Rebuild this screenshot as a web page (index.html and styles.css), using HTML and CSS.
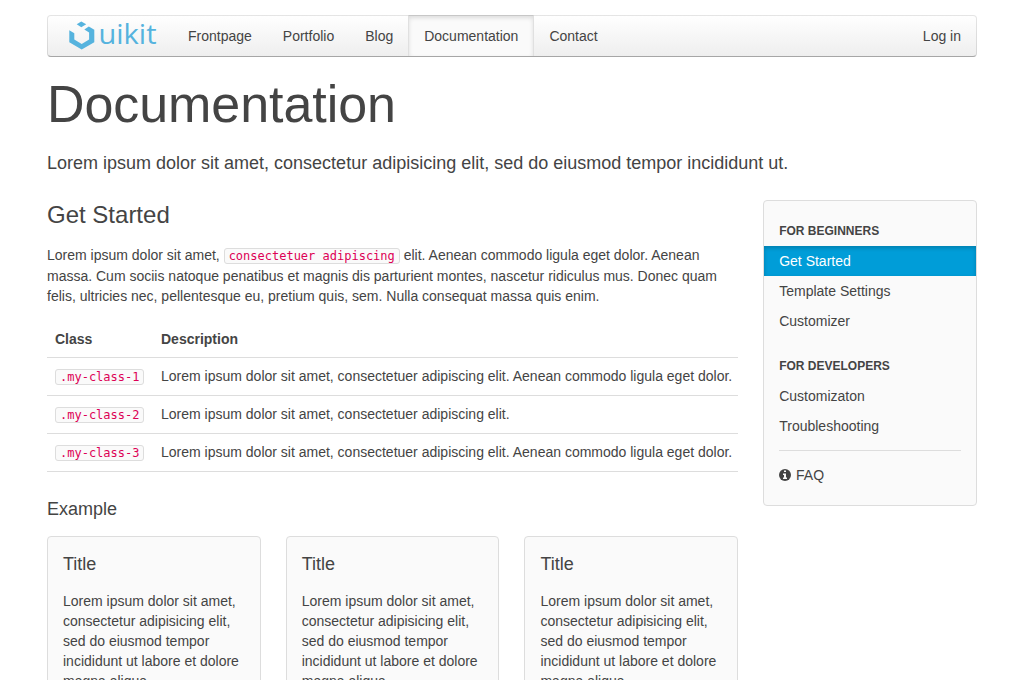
FILE: index.html
```html
<!DOCTYPE html>
<html lang="en">
<head>
<meta charset="utf-8">
<title>Documentation</title>
<link rel="stylesheet" href="styles.css">
</head>
<body>
<div class="container">
  <nav class="navbar">
    <a class="brand" href="#">
      <svg width="90" height="30" viewBox="0 0 90 30" role="img" aria-label="uikit">
        <g fill="#55b3de">
          <path d="M1.300 9.300 6.300 12.300V18.600l7.400 4.300 7.400-4.300V11.500L16.300 8.600l4.500-3.100 5.500 3.300V21.300L13.700 28.500 1.300 21.300z"/>
          <path d="M13.300.500 18.200 3.300 13.300 6.200 8.700 3.300z"/>
          <text class="wordmark" x="30.500" y="22.500" textLength="58" lengthAdjust="spacingAndGlyphs">uikit</text>
        </g>
      </svg>
    </a>
    <ul class="menu">
      <li><a href="#">Frontpage</a></li>
      <li><a href="#">Portfolio</a></li>
      <li><a href="#">Blog</a></li>
      <li class="current"><a href="#">Documentation</a></li>
      <li><a href="#">Contact</a></li>
    </ul>
    <ul class="menu menu-end">
      <li><a href="#">Log in</a></li>
    </ul>
  </nav>

  <header class="intro">
    <h1>Documentation</h1>
    <p class="lead">Lorem ipsum dolor sit amet, consectetur adipisicing elit, sed do eiusmod tempor incididunt ut.</p>
  </header>

  <div class="layout">
    <main class="content">
      <h2>Get Started</h2>
      <p class="text">Lorem ipsum dolor sit amet, <code>consectetuer adipiscing</code> elit. Aenean commodo ligula eget dolor. Aenean massa. Cum sociis natoque penatibus et magnis dis parturient montes, nascetur ridiculus mus. Donec quam felis, ultricies nec, pellentesque eu, pretium quis, sem. Nulla consequat massa quis enim.</p>
      <table class="table">
        <thead>
          <tr><th>Class</th><th>Description</th></tr>
        </thead>
        <tbody>
          <tr><td><code>.my-class-1</code></td><td>Lorem ipsum dolor sit amet, consectetuer adipiscing elit. Aenean commodo ligula eget dolor.</td></tr>
          <tr><td><code>.my-class-2</code></td><td>Lorem ipsum dolor sit amet, consectetuer adipiscing elit.</td></tr>
          <tr><td><code>.my-class-3</code></td><td>Lorem ipsum dolor sit amet, consectetuer adipiscing elit. Aenean commodo ligula eget dolor.</td></tr>
        </tbody>
      </table>
      <h3>Example</h3>
      <div class="cards">
        <section class="card"><h3>Title</h3><p>Lorem ipsum dolor sit amet, consectetur adipisicing elit, sed do eiusmod tempor incididunt ut labore et dolore magna aliqua.</p></section>
        <section class="card"><h3>Title</h3><p>Lorem ipsum dolor sit amet, consectetur adipisicing elit, sed do eiusmod tempor incididunt ut labore et dolore magna aliqua.</p></section>
        <section class="card"><h3>Title</h3><p>Lorem ipsum dolor sit amet, consectetur adipisicing elit, sed do eiusmod tempor incididunt ut labore et dolore magna aliqua.</p></section>
      </div>
    </main>
    <aside class="sidebar">
      <ul class="side-nav">
        <li class="side-header">For Beginners</li>
        <li class="selected"><a href="#">Get Started</a></li>
        <li><a href="#">Template Settings</a></li>
        <li><a href="#">Customizer</a></li>
        <li class="side-header">For Developers</li>
        <li><a href="#">Customizaton</a></li>
        <li><a href="#">Troubleshooting</a></li>
        <li class="divider"></li>
        <li><a href="#"><svg class="info" width="12" height="12" viewBox="0 0 12 12"><circle cx="6" cy="6" r="6" fill="#444"/><path fill="#fafafa" d="M5 1.500h2V3H5zM4 4.500h3V8.500h1V10H4V8.500h1V6H4z"/></svg> FAQ</a></li>
      </ul>
    </aside>
  </div>
</div>
</body>
</html>
```
FILE: styles.css
```css
* { box-sizing: border-box; }
html { overflow: hidden; }
body {
  margin: 0;
  height: 680px;
  overflow: hidden;
  background: #fff;
  color: #444;
  font: 14px/20px "Liberation Sans", Arial, sans-serif;
}
a { color: inherit; text-decoration: none; }
ul { list-style: none; margin: 0; padding: 0; }
h1, h2, h3, p { margin: 0; font-weight: normal; }

.container { width: 980px; margin: 0 auto; padding: 15px 25px 0; }

.navbar {
  display: flex;
  height: 42px;
  border: 1px solid rgba(0, 0, 0, .1);
  border-bottom-color: rgba(0, 0, 0, .3);
  border-radius: 4px;
  background: linear-gradient(to bottom, #fff, #eee) border-box;
}
.brand { display: flex; padding: 5px 15px 0 20px; }
.brand svg { display: block; overflow: visible; }
.wordmark { font: 400 27.5px "Open Sans", "Noto Sans", sans-serif; }
.menu { display: flex; }
.menu li { margin: -1px 0 0 -1px; }
.menu a {
  display: block;
  height: 41px;
  padding: 0 15px;
  border: 1px solid transparent;
  border-bottom-width: 0;
  line-height: 40px;
}
.menu .current a {
  border-color: rgba(0, 0, 0, .1);
  border-top-color: rgba(0, 0, 0, .2);
  background: #fafafa;
  box-shadow: inset 0 2px 4px rgba(0, 0, 0, .12);
}
.menu-end { margin-left: auto; }
.menu-end a { padding-right: 14px; }

.intro { padding-top: 21px; }
h1 { font-size: 52px; line-height: 52px; letter-spacing: -.07px; }
.lead { margin: 21px 0 25px; font-size: 18px; line-height: 24px; }

.layout { display: grid; grid-template-columns: 691.2px 213.75px; gap: 25px; align-items: start; }
h2 { margin-bottom: 15px; font-size: 24px; line-height: 30px; }
h3 { margin-bottom: 15px; font-size: 18px; line-height: 24px; }
.text { margin-bottom: 15px; }
code {
  padding: 0 4px;
  border: 1px solid #ddd;
  border-radius: 3px;
  background: #fafafa;
  color: #d05;
  font-family: "DejaVu Sans Mono", "Liberation Mono", monospace;
  font-size: 12px;
  white-space: nowrap;
}

.table { width: 100%; margin-bottom: 25px; border-collapse: collapse; table-layout: fixed; }
.table th, .table td { padding: 8px; border-bottom: 1px solid #ddd; text-align: left; vertical-align: top; }
.table th:first-child { width: 106px; }
.table td:last-child, .table th:last-child { padding-right: 0; }

.cards { display: grid; grid-template-columns: repeat(3, 1fr); gap: 25px; }
.card, .sidebar { border: 1px solid #ddd; border-radius: 4px; background: #fafafa; }
.card { padding: 15px; }

.sidebar { padding: 15px 0; }
.side-nav a { display: block; padding: 5px 15px; }
.side-header { padding: 5px 15px; font-size: 12px; font-weight: bold; text-transform: uppercase; }
.side-nav li:not(:first-child).side-header { margin-top: 15px; }
.selected a {
  background: #009dd8;
  color: #fff;
  box-shadow: inset 0 2px 4px rgba(0, 0, 0, .2);
}
.divider { margin: 9px 15px; border-top: 1px solid #ddd; }
.info { margin-right: 1px; vertical-align: -1px; }
```
